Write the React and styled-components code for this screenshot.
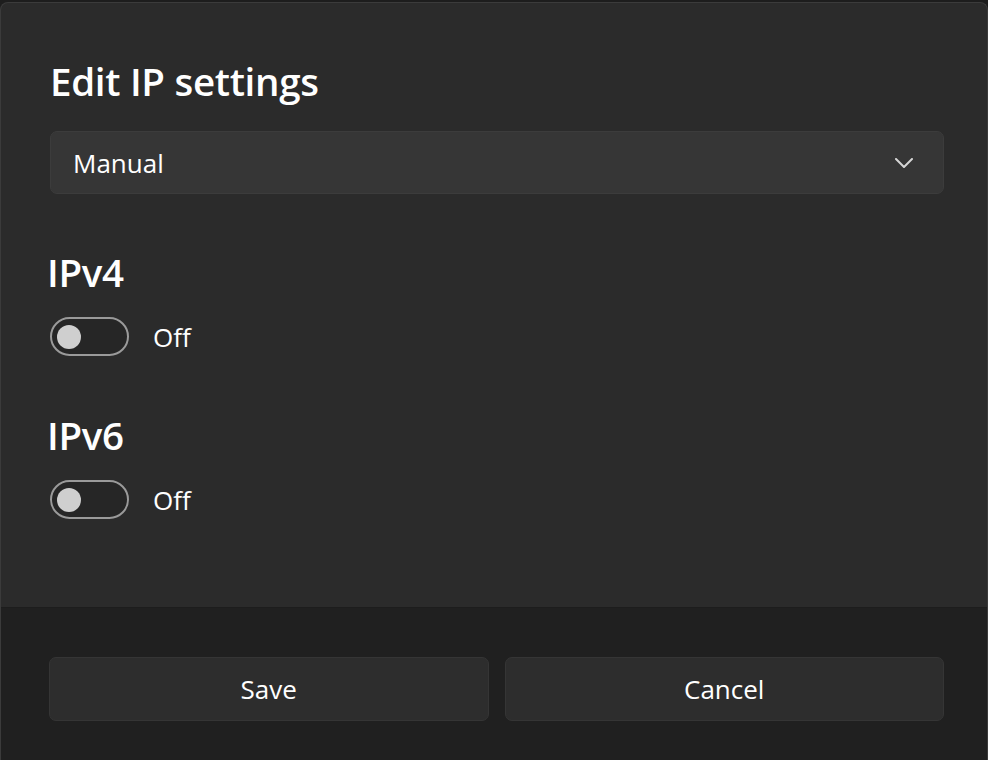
import React, { useState } from "react";
import styled, { createGlobalStyle } from "styled-components";

const GlobalStyle = createGlobalStyle`
  html, body {
    margin: 0;
    padding: 0;
    background: #1d1d1d;
    height: 100%;
  }
  body {
    font-family: "Open Sans", "Noto Sans", sans-serif;
    color: #fff;
    overflow: hidden;
  }
  #root {
    height: 100%;
  }
`;

const Page = styled.div`
  height: 100%;
  padding-top: 2px;
  box-sizing: border-box;
  display: flex;
  flex-direction: column;
`;

const Dialog = styled.div`
  flex: 1;
  display: flex;
  flex-direction: column;
  background: #2b2b2b;
  border: 1px solid #3b3b3b;
  border-bottom: none;
  border-radius: 8px 8px 0 0;
  overflow: hidden;
`;

const Body = styled.div`
  flex: 1;
  padding: 0 43px 0 49px;
  display: flex;
  flex-direction: column;
`;

const Title = styled.h1`
  margin: 54px 0 0;
  font-size: 38.5px;
  line-height: 48px;
  font-weight: 600;
  letter-spacing: -0.3px;
`;

const Select = styled.button`
  margin-top: 26px;
  height: 63px;
  box-sizing: border-box;
  display: flex;
  align-items: center;
  justify-content: space-between;
  padding: 0 30px 0 22px;
  background: #363636;
  border: 1px solid #3c3c3c;
  border-radius: 7px;
  color: #fff;
  font-family: inherit;
  font-size: 26px;
  text-align: left;
  cursor: pointer;
`;

const Section = styled.section`
  margin-top: ${(p) => p.$top}px;
  display: flex;
  flex-direction: column;
  gap: 25px;
`;

const SectionTitle = styled.h2`
  margin: 0 0 0 -3px;
  font-size: 38.5px;
  line-height: 40px;
  font-weight: 600;
  letter-spacing: -0.3px;
`;

const ToggleRow = styled.label`
  display: flex;
  align-items: center;
  gap: 24px;
  cursor: pointer;
`;

const Track = styled.span`
  width: 79px;
  height: 39px;
  box-sizing: border-box;
  border-radius: 20px;
  border: 2px solid ${(p) => (p.$on ? "#4cc2ff" : "#9a9a9a")};
  background: ${(p) => (p.$on ? "#4cc2ff" : "#262626")};
  display: flex;
  align-items: center;
  padding: 0 5px;
  justify-content: ${(p) => (p.$on ? "flex-end" : "flex-start")};
`;

const Knob = styled.span`
  width: 24px;
  height: 24px;
  border-radius: 50%;
  background: ${(p) => (p.$on ? "#000" : "#cfcfcf")};
`;

const ToggleLabel = styled.span`
  font-size: 26px;
  color: #fff;
`;

const Footer = styled.div`
  background: #202020;
  border-top: 1px solid #1d1d1d;
  padding: 49px 43px 39px 48px;
  display: grid;
  grid-template-columns: 1fr 1fr;
  gap: 16px;
`;

const Button = styled.button`
  height: 64px;
  background: #2d2d2d;
  border: 1px solid #353535;
  border-radius: 7px;
  color: #fff;
  font-family: inherit;
  font-size: 26px;
  cursor: pointer;
`;

const Chevron = () => (
  <svg width="18" height="10" viewBox="0 0 18 10" fill="none">
    <path d="M1 1l8 8 8-8" stroke="#d6d6d6" strokeWidth="2" strokeLinecap="round" strokeLinejoin="round" />
  </svg>
);

const Toggle = ({ on, onChange }) => (
  <ToggleRow onClick={onChange}>
    <Track $on={on}>
      <Knob $on={on} />
    </Track>
    <ToggleLabel>{on ? "On" : "Off"}</ToggleLabel>
  </ToggleRow>
);

export default function App() {
  const [v4, setV4] = useState(false);
  const [v6, setV6] = useState(false);

  return (
    <>
      <GlobalStyle />
      <Page>
        <Dialog>
          <Body>
            <Title>Edit IP settings</Title>
            <Select>
              <span>Manual</span>
              <Chevron />
            </Select>
            <Section $top={58}>
              <SectionTitle>IPv4</SectionTitle>
              <Toggle on={v4} onChange={() => setV4(!v4)} />
            </Section>
            <Section $top={59}>
              <SectionTitle>IPv6</SectionTitle>
              <Toggle on={v6} onChange={() => setV6(!v6)} />
            </Section>
          </Body>
          <Footer>
            <Button>Save</Button>
            <Button>Cancel</Button>
          </Footer>
        </Dialog>
      </Page>
    </>
  );
}
